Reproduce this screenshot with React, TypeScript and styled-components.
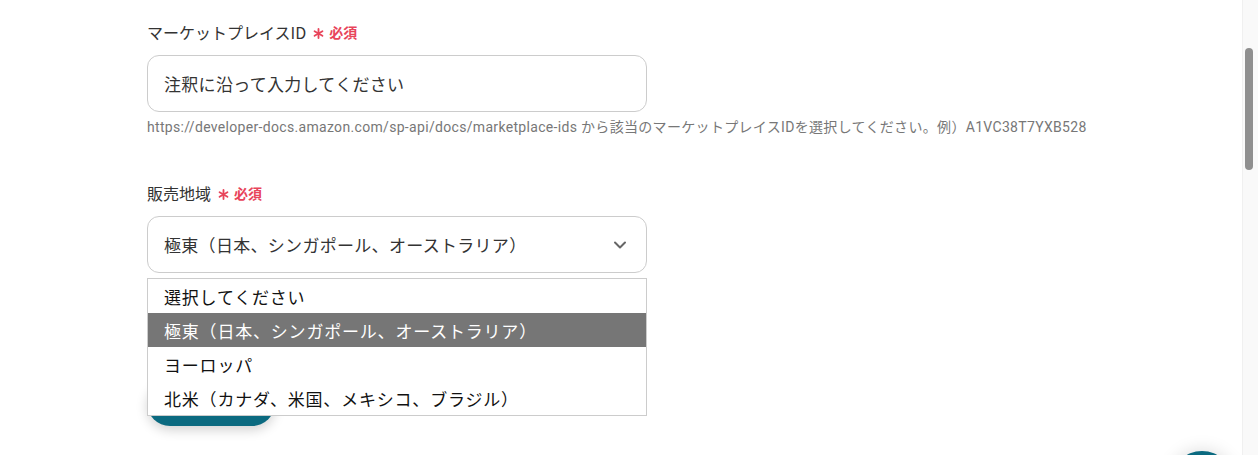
import styled, { createGlobalStyle } from 'styled-components'

const GlobalStyle = createGlobalStyle`
  html, body {
    margin: 0;
    padding: 0;
    background: #ffffff;
    overflow: hidden;
  }
  body {
    font-family: Roboto, 'Noto Sans CJK JP', sans-serif;
    color: #333333;
  }
`

const Page = styled.div`
  position: relative;
  width: 1258px;
  height: 455px;
  overflow: hidden;
  padding: 20px 0 0 147px;
  box-sizing: border-box;
`

const Form = styled.div`
  width: 500px;
  display: flex;
  flex-direction: column;
`

const Field = styled.div<{ gapAfter?: number }>`
  display: flex;
  flex-direction: column;
  margin-bottom: ${({ gapAfter }) => gapAfter ?? 0}px;
`

const Label = styled.div`
  display: flex;
  align-items: center;
  height: 24px;
  margin-bottom: 11px;
  font-family: 'Noto Sans CJK JP', sans-serif;
  font-size: 16px;
  color: #333333;
`

const Asterisk = styled.svg`
  width: 11px;
  height: 11px;
  margin-left: 7px;
  margin-top: 3px;
`

const Required = styled.span`
  margin-left: 5px;
  color: #e8445a;
  font-size: 14px;
  font-weight: 700;
`

const SelectWrap = styled.div`
  position: relative;
`

const Box = styled.div`
  height: 57px;
  box-sizing: border-box;
  border: 1px solid #cccccc;
  border-radius: 12px;
  padding: 0 16px;
  display: flex;
  align-items: center;
  justify-content: space-between;
  font-family: 'Noto Sans CJK JP', sans-serif;
  font-size: 17px;
  letter-spacing: 0.3px;
  color: #333333;
  background: #ffffff;
`

const Help = styled.div`
  margin-top: 4px;
  font-family: Roboto, 'Noto Sans CJK JP', sans-serif;
  font-size: 14px;
  letter-spacing: 0.32px;
  color: #777777;
  white-space: nowrap;
`

const Chevron = styled.svg`
  width: 14px;
  height: 14px;
  margin-right: 3px;
`

const Menu = styled.ul`
  position: absolute;
  left: 0;
  top: calc(100% + 5px);
  width: 500px;
  box-sizing: border-box;
  margin: 0;
  padding: 0;
  list-style: none;
  background: #ffffff;
  border: 1px solid #cccccc;
  z-index: 2;
`

const Option = styled.li<{ selected?: boolean }>`
  height: 34px;
  display: flex;
  align-items: center;
  padding: 0 16px;
  font-family: 'Noto Sans CJK JP', sans-serif;
  font-size: 17px;
  letter-spacing: 0.8px;
  color: ${({ selected }) => (selected ? '#ffffff' : '#111111')};
  background: ${({ selected }) => (selected ? '#767676' : 'transparent')};
`

const SaveButton = styled.button`
  margin-top: 107px;
  width: 128px;
  height: 46px;
  border: none;
  border-radius: 23px;
  background: #0b6a80;
  box-shadow: 0 4px 12px rgba(0, 0, 0, 0.18);
`

const Fab = styled.div`
  position: absolute;
  left: 1171px;
  top: 451px;
  width: 62px;
  height: 62px;
  border-radius: 50%;
  background: #0b6a80;
  box-shadow: 0 0 18px rgba(0, 0, 0, 0.15);
`

const ScrollTrack = styled.div`
  position: absolute;
  right: 0;
  top: 0;
  width: 15px;
  height: 455px;
  background: #f9f9f9;
  border-left: 1px solid #f0f0f0;
`

const ScrollThumb = styled.div`
  margin: 48px 0 0 2px;
  width: 8px;
  height: 122px;
  border-radius: 4px;
  background: #8f8f8f;
`

const regions = [
  '選択してください',
  '極東（日本、シンガポール、オーストラリア）',
  'ヨーロッパ',
  '北米（カナダ、米国、メキシコ、ブラジル）',
]

const RequiredMark = () => (
  <>
    <Asterisk viewBox="0 0 12 12" fill="none">
      <g stroke="#e8445a" strokeWidth="2" strokeLinecap="round">
        <path d="M6 1 V11" />
        <path d="M1.7 3.5 L10.3 8.5" />
        <path d="M1.7 8.5 L10.3 3.5" />
      </g>
    </Asterisk>
    <Required>必須</Required>
  </>
)

export default function App() {
  return (
    <>
      <GlobalStyle />
      <Page>
        <Form>
          <Field gapAfter={45}>
            <Label>
              マーケットプレイスID
              <RequiredMark />
            </Label>
            <Box>注釈に沿って入力してください</Box>
            <Help>
              https://developer-docs.amazon.com/sp-api/docs/marketplace-ids
              から該当のマーケットプレイスIDを選択してください。例）A1VC38T7YXB528
            </Help>
          </Field>
          <Field>
            <Label>
              販売地域
              <RequiredMark />
            </Label>
            <SelectWrap>
              <Box>
                <span>極東（日本、シンガポール、オーストラリア）</span>
                <Chevron viewBox="0 0 14 14" fill="none">
                  <path
                    d="M2 4.5 L7 9.5 L12 4.5"
                    stroke="#666666"
                    strokeWidth="2"
                    strokeLinecap="round"
                    strokeLinejoin="round"
                  />
                </Chevron>
              </Box>
              <Menu>
                {regions.map((r, i) => (
                  <Option key={r} selected={i === 1}>
                    {r}
                  </Option>
                ))}
              </Menu>
            </SelectWrap>
            <SaveButton />
          </Field>
        </Form>
        <Fab />
        <ScrollTrack>
          <ScrollThumb />
        </ScrollTrack>
      </Page>
    </>
  )
}
